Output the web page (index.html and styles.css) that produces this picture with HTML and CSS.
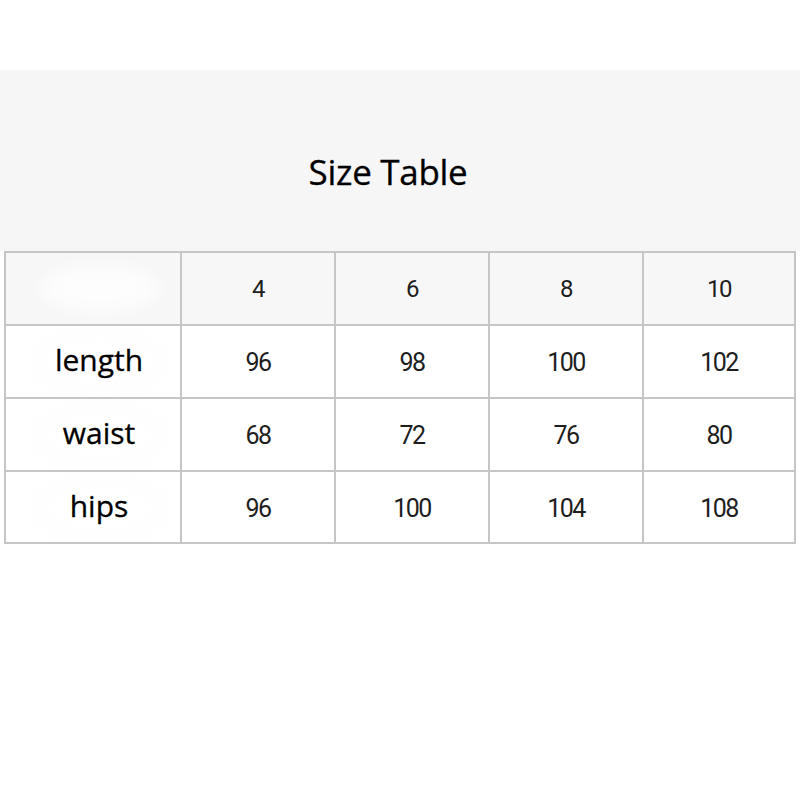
FILE: index.html
```html
<!DOCTYPE html>
<html>
<head>
<meta charset="utf-8">
<link rel="stylesheet" href="styles.css">
</head>
<body>
<div class="page">
  <header class="band">
    <h1 class="title">Size Table</h1>
  </header>
  <div class="grid">
    <div class="cell head label"><span class="glow"></span></div>
    <div class="cell head num">4</div>
    <div class="cell head num">6</div>
    <div class="cell head num">8</div>
    <div class="cell head num">10</div>

    <div class="cell label"><span class="glow"></span><span class="txt">length</span></div>
    <div class="cell num">96</div>
    <div class="cell num">98</div>
    <div class="cell num">100</div>
    <div class="cell num">102</div>

    <div class="cell label"><span class="glow"></span><span class="txt">waist</span></div>
    <div class="cell num">68</div>
    <div class="cell num">72</div>
    <div class="cell num">76</div>
    <div class="cell num">80</div>

    <div class="cell label"><span class="glow"></span><span class="txt">hips</span></div>
    <div class="cell num">96</div>
    <div class="cell num">100</div>
    <div class="cell num">104</div>
    <div class="cell num">108</div>
  </div>
</div>
</body>
</html>
```

FILE: styles.css
```css
html, body {
  margin: 0;
  padding: 0;
  background: #ffffff;
}

.page {
  width: 800px;
  height: 800px;
  padding-top: 70px;
  box-sizing: border-box;
  background: #ffffff;
}

.band {
  height: 181px;
  background: #f6f6f6;
  display: flex;
  justify-content: center;
  box-sizing: border-box;
  padding-top: 80px;
  padding-right: 24px;
}

.title {
  margin: 0;
  font-family: "Open Sans", "Noto Sans", sans-serif;
  font-weight: 500;
  font-size: 35px;
  line-height: 44px;
  letter-spacing: -0.3px;
  color: #000000;
  height: 44px;
  -webkit-text-stroke: 0.3px #000000;
}

.grid {
  margin: 0 4px;
  width: 792px;
  box-sizing: border-box;
  display: grid;
  grid-template-columns: 174px 152px 152px 152px 150px;
  grid-template-rows: 71px 71px 71px 70px;
  gap: 2px;
  padding: 2px;
  background: #c6c6c6;
}

.cell {
  background: #ffffff;
  display: flex;
  align-items: center;
  justify-content: center;
  position: relative;
  overflow: hidden;
}

.cell.head {
  background: #f7f7f7;
}

.num {
  font-family: "Roboto", "Open Sans", sans-serif;
  font-size: 25px;
  letter-spacing: -1.5px;
  color: #1e1e1e;
  padding-top: 2px;
}

.head.num {
  font-size: 24px;
  padding-top: 0;
}

.label {
  padding-left: 12px;
  font-family: "Open Sans", "Noto Sans", sans-serif;
  font-weight: 500;
  font-size: 30px;
  color: #000000;
  padding-bottom: 4px;
  -webkit-text-stroke: 0.3px #000000;
}

.txt {
  position: relative;
}

.glow {
  position: absolute;
  left: 34px;
  top: 12px;
  width: 120px;
  height: 48px;
  border-radius: 50%;
  background: rgba(255, 255, 255, 0.7);
  filter: blur(8px);
}

.cell:not(.head) .glow {
  background: transparent;
  box-shadow: 0 0 14px 2px rgba(238, 238, 238, 0.3);
}
```
